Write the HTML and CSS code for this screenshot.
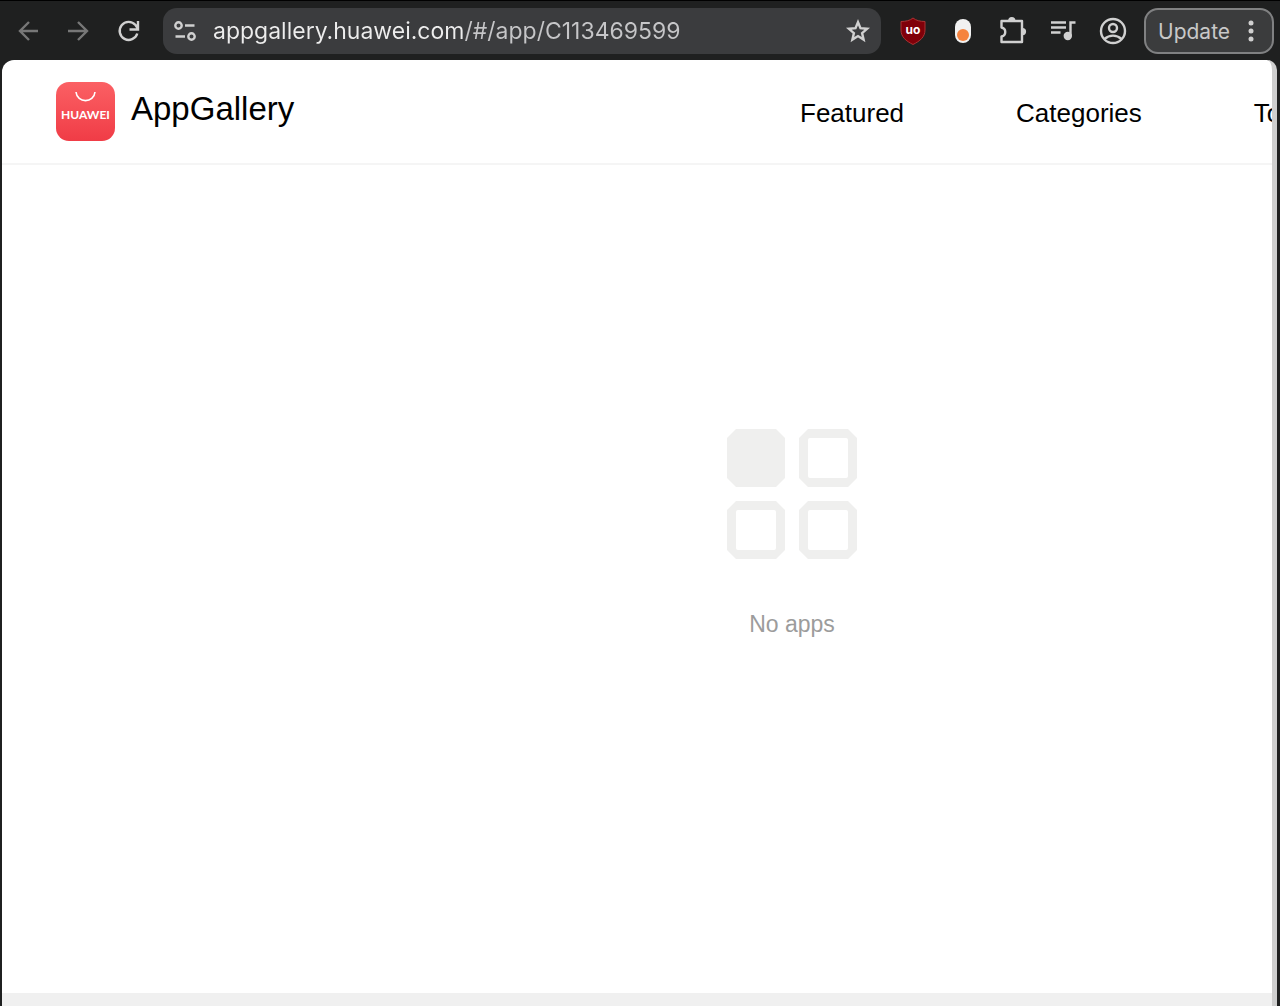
FILE: index.html
```html
<!DOCTYPE html>
<html lang="en">
<head>
  <meta charset="UTF-8">
  <meta name="viewport" content="width=device-width, initial-scale=1.0">
  <title>AppGallery</title>
  <link rel="stylesheet" href="styles.css">
</head>
<body>

  <div class="toolbar">
    <button class="tool-btn dim" aria-label="Back">
      <svg width="28" height="28" viewBox="0 0 28 28"><path d="M24 14H6M15 5l-9 9 9 9"/></svg>
    </button>
    <button class="tool-btn dim" aria-label="Forward">
      <svg width="28" height="28" viewBox="0 0 28 28"><path d="M4 14h19M14 5l9 9-9 9"/></svg>
    </button>
    <button class="tool-btn" aria-label="Reload">
      <svg width="28" height="28" viewBox="0 0 28 28"><path d="M23.300 16.500A9 9 0 1 1 21.500 8l2 3M24 4v8.500h-8.500"/></svg>
    </button>

    <div class="address-bar">
      <button class="site-info" aria-label="Site information">
        <svg width="24" height="24" viewBox="0 0 24 24"><circle cx="5.500" cy="6.500" r="3.200"/><path d="M12 6.500h9.500M2.500 17.500h9.500"/><circle cx="18.500" cy="17.500" r="3.200"/></svg>
      </button>
      <input class="url" type="text" aria-label="Address" value="appgallery.huawei.com/#/app/C113469599" spellcheck="false">
      <button class="bookmark" aria-label="Bookmark">
        <svg width="26" height="26" viewBox="0 0 26 26"><path d="M13 4.200l2.500 6 6.600.6-5 4.300 1.500 6.500-5.600-3.500-5.600 3.500 1.500-6.500-5-4.300 6.600-.6z"/></svg>
      </button>
    </div>

    <button class="tool-btn" aria-label="uBlock Origin">
      <svg width="28" height="28" viewBox="0 0 28 28">
        <path class="shield" d="M14 1c3 2.500 7 3.500 12 3.500V13c0 7-5 11-12 14.500C7 24 2 20 2 13V4.500C7 4.500 11 3.500 14 1z"/>
        <text class="shield-mark" x="14" y="17" text-anchor="middle">uo</text>
      </svg>
    </button>
    <button class="tool-btn" aria-label="Extension">
      <svg width="28" height="28" viewBox="0 0 28 28">
        <rect class="pill" x="6" y="2" width="16" height="24" rx="8"/>
        <circle class="pill-dot" cx="14" cy="18" r="6"/>
      </svg>
    </button>
    <button class="tool-btn" aria-label="Extensions">
      <svg width="30" height="30" viewBox="0 0 30 30">
        <path stroke-linejoin="round" d="M3.500 5h20.500V26H3.500v-5.500c5-1 5-8 0-9z"/>
        <path class="solid" d="M10.200 4.500a3.600 3.600 0 0 1 7.200 0zM24.500 12a3.600 3.600 0 0 1 0 7.200z"/>
      </svg>
    </button>
    <button class="tool-btn" aria-label="Media controls">
      <svg width="28" height="28" viewBox="0 0 28 28">
        <path d="M2 5.500h15M2 10.500h15M2 15.500h9.500M21.500 19V5.500h5"/>
        <circle class="solid" cx="18.800" cy="19" r="4.200"/>
      </svg>
    </button>
    <button class="tool-btn" aria-label="Profile">
      <svg width="28" height="28" viewBox="0 0 28 28"><circle cx="14" cy="14" r="12"/><circle cx="14" cy="11" r="4"/><path d="M5.500 22c5-4.500 12-4.500 17 0"/></svg>
    </button>

    <button class="update-btn">
      Update
      <svg width="8" height="24" viewBox="0 0 8 24"><circle cx="4" cy="4" r="2.500"/><circle cx="4" cy="12" r="2.500"/><circle cx="4" cy="20" r="2.500"/></svg>
    </button>
  </div>

  <div class="viewport">
    <div class="page">
      <header class="header">
        <a class="brand" href="#">
          <svg class="logo" width="60" height="60" viewBox="0 0 60 60">
            <defs>
              <linearGradient id="red" x1="0" y1="0" x2="0" y2="1">
                <stop offset="0" stop-color="#fb6064"/>
                <stop offset="1" stop-color="#f03c46"/>
              </linearGradient>
            </defs>
            <rect x="0" y="0" width="59" height="59" rx="13" fill="url(#red)"/>
            <path d="M20 10c1 11.500 18 11.500 19 0" fill="none" stroke="#fff" stroke-width="1.600"/>
            <text x="29.500" y="37" text-anchor="middle">HUAWEI</text>
          </svg>
          <span class="brand-name">AppGallery</span>
        </a>
        <nav class="nav">
          <a href="#">Featured</a>
          <a href="#">Categories</a>
          <a href="#">Top</a>
        </nav>
      </header>

      <main class="empty">
        <svg width="132" height="132" viewBox="0 0 132 132">
          <path class="tile" d="M10 1h40l9 9v40l-9 9H10l-9-9V10z"/>
          <path class="tile" fill-rule="evenodd" d="M82 1h40l9 9v40l-9 9H82l-9-9V10zM84 10q-2 0-2 2v36q0 2 2 2h36q2 0 2-2V12q0-2-2-2z"/>
          <path class="tile" fill-rule="evenodd" d="M10 73h40l9 9v40l-9 9H10l-9-9V82zM12 82q-2 0-2 2v36q0 2 2 2h36q2 0 2-2V84q0-2-2-2z"/>
          <path class="tile" fill-rule="evenodd" d="M82 73h40l9 9v40l-9 9H82l-9-9V82zM84 82q-2 0-2 2v36q0 2 2 2h36q2 0 2-2V84q0-2-2-2z"/>
        </svg>
        <p>No apps</p>
      </main>

      <footer class="footer"></footer>
    </div>
  </div>

</body>
</html>
```
FILE: styles.css
```css
* {
  box-sizing: border-box;
}

body {
  margin: 0;
  height: 100vh;
  display: flex;
  flex-direction: column;
  overflow: hidden;
  background: #1f2020;
  font-family: "Liberation Sans", Arial, sans-serif;
}

button {
  padding: 0;
  border: none;
  background: none;
  cursor: pointer;
}

/* browser toolbar */
.toolbar {
  display: flex;
  align-items: center;
  flex: none;
  height: 60px;
  padding: 1px 6px 0 3px;
  border-top: 1px solid #000;
}

.toolbar svg {
  display: block;
  fill: none;
  stroke: #d0d0d0;
  stroke-width: 2.4;
}

.tool-btn {
  display: flex;
  align-items: center;
  justify-content: center;
  flex: none;
  width: 50px;
  height: 46px;
}

.toolbar .dim svg {
  stroke: #777;
}

.toolbar .solid {
  fill: #d0d0d0;
  stroke: none;
}

.shield {
  fill: #800009;
  stroke: #a33;
  stroke-width: 1;
}

.shield-mark {
  fill: #fff;
  stroke: none;
  font-family: Inter, sans-serif;
  font-size: 12px;
  font-weight: 700;
}

.pill {
  fill: #f1f1f1;
  stroke: none;
}

.pill-dot {
  fill: #f5833f;
  stroke: none;
}

.address-bar {
  display: flex;
  align-items: center;
  flex: 1;
  min-width: 0;
  height: 46px;
  margin: 0 7px 0 10px;
  padding: 0 10px;
  border-radius: 14px;
  background: #3b3c3e;
}

.site-info,
.bookmark {
  flex: none;
}

.url {
  flex: 1;
  min-width: 0;
  margin: 0 16px;
  padding: 0;
  border: none;
  outline: none;
  font-family: Inter, sans-serif;
  font-size: 23px;
  line-height: 32px;
  /* host is brighter than the path */
  color: transparent;
  background: linear-gradient(to right, #ededed 250px, #c6c6c8 250px);
  background-clip: text;
  -webkit-background-clip: text;
}

.update-btn {
  display: flex;
  align-items: center;
  justify-content: space-between;
  flex: none;
  width: 130px;
  height: 46px;
  margin-left: 6px;
  padding: 0 17px 0 12px;
  border: 2px solid #808182;
  border-radius: 14px;
  background: #3b3c3d;
  color: #c8c8c8;
  font-family: Inter, sans-serif;
  font-size: 21px;
}

.update-btn svg {
  fill: #d0d0d0;
  stroke: none;
}

/* visible part of the page, the rest runs off to the right */
.viewport {
  flex: 1;
  min-height: 0;
  margin: 0 3px 0 2px;
  overflow: hidden;
  border-right: 5px solid #cecece;
  border-radius: 12px 10px 0 0;
  background: #fff;
}

.page {
  display: flex;
  flex-direction: column;
  min-width: 1580px;
  height: 100%;
}

.header {
  display: flex;
  align-items: center;
  height: 105px;
  padding: 0 54px;
  border-bottom: 2px solid #f5f5f5;
}

.brand {
  display: flex;
  align-items: center;
  width: 744px;
  color: #000;
  text-decoration: none;
}

.logo text {
  fill: #fff;
  font-family: Lato, sans-serif;
  font-size: 12px;
  font-weight: 700;
}

.brand-name {
  margin-left: 15px;
  padding-bottom: 6px;
  font-size: 33px;
}

.nav {
  display: flex;
  gap: 112px;
  padding-top: 4px;
}

.nav a {
  color: #000;
  font-size: 26px;
  text-decoration: none;
}

.empty {
  display: flex;
  flex-direction: column;
  align-items: center;
  flex: 1;
  padding-top: 263px;
}

.empty p {
  margin: 50px 0 0;
  color: #9c9c9c;
  font-size: 23px;
  line-height: 28px;
}

.tile {
  fill: #efefee;
}

.footer {
  height: 13px;
  background: #f0f0f0;
}
```
